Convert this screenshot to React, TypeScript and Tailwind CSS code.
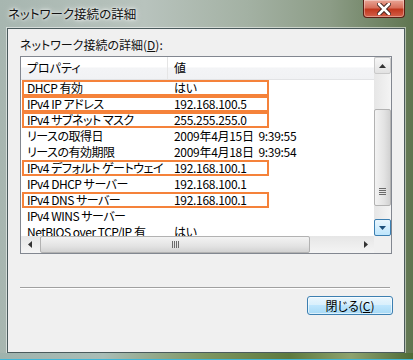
import type { ReactNode } from 'react';

type Row = { name: string; value: string; marked?: boolean };

const rows: Row[] = [
  { name: 'DHCP 有効', value: 'はい', marked: true },
  { name: 'IPv4 IP アドレス', value: '192.168.100.5', marked: true },
  { name: 'IPv4 サブネット マスク', value: '255.255.255.0', marked: true },
  { name: 'リースの取得日', value: '2009年4月15日  9:39:55' },
  { name: 'リースの有効期限', value: '2009年4月18日  9:39:54' },
  { name: 'IPv4 デフォルト ゲートウェイ', value: '192.168.100.1', marked: true },
  { name: 'IPv4 DHCP サーバー', value: '192.168.100.1' },
  { name: 'IPv4 DNS サーバー', value: '192.168.100.1', marked: true },
  { name: 'IPv4 WINS サーバー', value: '' },
  { name: 'NetBIOS over TCP/IP 有', value: 'はい' },
];

function ScrollButton({ children, hot }: { children: ReactNode; hot?: boolean }) {
  return (
    <div
      className={
        hot
          ? 'flex h-[17px] w-[17px] items-center justify-center rounded-[2px] border border-[#3c7fb1] bg-[linear-gradient(180deg,#eaf6fd,#bee6fd)]'
          : 'flex h-[17px] w-[17px] items-center justify-center rounded-[2px] border border-[#c9c9c9] bg-[linear-gradient(180deg,#f6f6f6,#e2e2e2)]'
      }
    >
      {children}
    </div>
  );
}

export default function App() {
  return (
    <div className="relative flex h-[360px] w-[413px] flex-col overflow-hidden bg-[linear-gradient(90deg,#a7b6b0_0%,#b8c3bd_35%,#a3b1a3_60%,#8c9c86_80%,#5f7550_100%)] font-['Noto_Sans_CJK_JP',sans-serif] text-[12px] leading-none text-black [font-feature-settings:'palt']">
      {/* title bar */}
      <div className="relative flex h-[28px] items-center pl-[8px]">
        <span className="text-[12.5px] text-[#111] [text-shadow:0_0_6px_#fff,0_0_3px_#fff]">ネットワーク接続の詳細</span>
        <div className="absolute right-[8px] top-0 flex h-[18px] w-[42px] items-center justify-center rounded-b-[4px] border border-t-0 border-[#5a1e14] bg-[linear-gradient(180deg,#e9a596_0%,#d7705c_45%,#c1371e_55%,#d4604a_100%)] shadow-[inset_0_0_0_1px_rgba(255,255,255,0.35)]">
          <svg width="14" height="12" viewBox="0 0 14 12">
            <path d="M2 1 L12 11 M12 1 L2 11" stroke="#3b1d18" strokeWidth="4.5" strokeLinecap="round" />
            <path d="M2 1 L12 11 M12 1 L2 11" stroke="#fff" strokeWidth="2.6" strokeLinecap="round" />
          </svg>
        </div>
      </div>

      {/* client area */}
      <div className="ml-[7px] mr-[8px] flex h-[325px] flex-col border border-[#4a5a5c] bg-[#f0f0f0] px-[12px] shadow-[0_0_0_1px_rgba(255,255,255,0.5)]">
        <div className="mt-[10px] h-[17px] text-[#111]">
          ネットワーク接続の詳細(<span className="underline">D</span>):
        </div>

        {/* list box */}
        <div className="grid h-[198px] w-[372px] grid-cols-[1fr_17px] grid-rows-[1fr_17px] border border-[#828790] bg-white">
          <div className="overflow-hidden">
            <div className="flex h-[23px] border-b border-[#e2e3e5] bg-[linear-gradient(180deg,#ffffff_0%,#ffffff_45%,#f3f4f6_50%,#f1f2f4_100%)]">
              <div className="flex w-[147px] items-center border-r border-[#e5e5e5] pl-[6px]">プロパティ</div>
              <div className="flex items-center pl-[6px]">値</div>
            </div>
            {rows.map((r) => (
              <div key={r.name} className="relative flex h-[16px] items-center whitespace-pre">
                <div className="w-[147px] pl-[6px] tracking-[-0.5px]">{r.name}</div>
                <div className="pl-[6px] tracking-[-0.3px]">{r.value}</div>
                {r.marked && (
                  <span className="absolute inset-y-0 left-[1px] w-[247px] border-2 border-[#f5823a]" />
                )}
              </div>
            ))}
          </div>

          {/* vertical scrollbar */}
          <div className="flex flex-col bg-[linear-gradient(90deg,#e6e6e6,#f4f4f4)]">
            <ScrollButton>
              <svg width="7" height="4" viewBox="0 0 7 4"><path d="M0 4 L3.5 0 L7 4 Z" fill="#333" /></svg>
            </ScrollButton>
            <div className="mt-[35px] flex h-[97px] items-end justify-center rounded-[2px] border border-[#b2b2b2] bg-[linear-gradient(90deg,#f3f3f3,#e3e3e3_60%,#d2d2d2)] pb-[10px]">
              <div className="flex w-[7px] flex-col gap-[1px]">
                <div className="h-[1px] bg-[#6a6a6a]" />
                <div className="h-[1px] bg-[#6a6a6a]" />
                <div className="h-[1px] bg-[#6a6a6a]" />
                <div className="h-[1px] bg-[#6a6a6a]" />
              </div>
            </div>
            <div className="flex-1" />
            <ScrollButton hot>
              <svg width="7" height="4" viewBox="0 0 7 4"><path d="M0 0 L7 0 L3.5 4 Z" fill="#1d4f7a" /></svg>
            </ScrollButton>
          </div>

          {/* horizontal scrollbar */}
          <div className="flex items-center bg-[linear-gradient(180deg,#e6e6e6,#f4f4f4)]">
            <div className="flex h-[17px] w-[17px] items-center justify-center">
              <svg width="4" height="7" viewBox="0 0 4 7"><path d="M4 0 L0 3.5 L4 7 Z" fill="#333" /></svg>
            </div>
            <div className="ml-[2px] flex h-[17px] w-[270px] items-center justify-center rounded-[2px] border border-[#b2b2b2] bg-[linear-gradient(180deg,#f3f3f3,#e3e3e3_60%,#d2d2d2)]">
              <div className="flex h-[7px] gap-[1px]">
                <div className="w-[1px] bg-[#6a6a6a]" />
                <div className="w-[1px] bg-[#6a6a6a]" />
                <div className="w-[1px] bg-[#6a6a6a]" />
                <div className="w-[1px] bg-[#6a6a6a]" />
              </div>
            </div>
            <div className="flex-1" />
            <div className="flex h-[17px] w-[17px] items-center justify-center">
              <svg width="4" height="7" viewBox="0 0 4 7"><path d="M0 0 L4 3.5 L0 7 Z" fill="#333" /></svg>
            </div>
          </div>
          <div className="bg-[#f0f0f0]" />
        </div>

        {/* separator */}
        <div className="mt-[33px] h-[2px] w-[370px] border-t border-b border-t-[#a0a0a0] border-b-white" />

        <div className="mt-[7px] flex justify-end">
          <button className="mr-[-1px] flex h-[19px] w-[86px] items-center justify-center rounded-[3px] border border-[#3c7fb1] bg-[linear-gradient(180deg,#eaf6fd_0%,#d9f0fc_45%,#bee6fd_50%,#a7d9f5_100%)] text-[12px] shadow-[inset_0_0_0_1px_rgba(255,255,255,0.6)]">
            閉じる(<span className="underline">C</span>)
          </button>
        </div>
      </div>

      {/* bottom frame */}
      <div className="mt-auto h-[6px] bg-[linear-gradient(90deg,#9fb3ad_0%,#a9bdb6_25%,#7d9660_50%,#5e7a3e_70%,#8ea36f_85%,#4d6a36_100%)]" />
      <div className="h-[1px] bg-[#3fb7d9]" />
    </div>
  );
}
